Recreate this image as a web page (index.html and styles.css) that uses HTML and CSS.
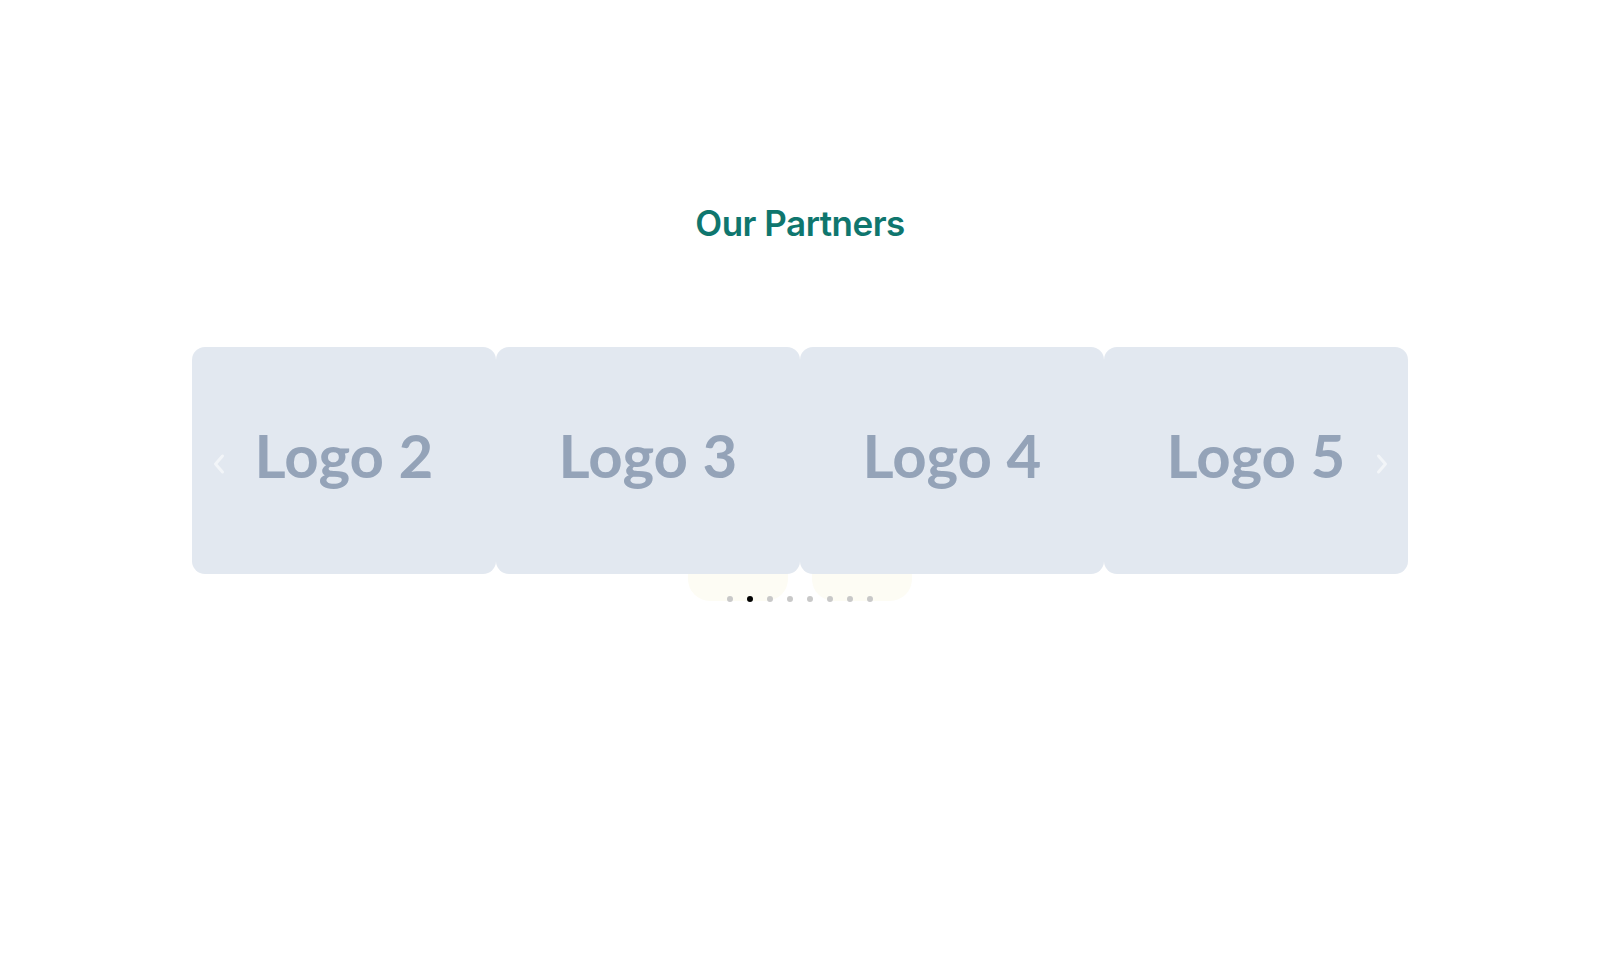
FILE: index.html
```html
<!DOCTYPE html>
<html lang="en">
<head>
<meta charset="utf-8">
<title>Our Partners</title>
<link rel="stylesheet" href="styles.css">
</head>
<body>
  <section class="partners">
    <h2 class="partners-title">Our Partners</h2>

    <div class="carousel">
      <div class="track">
        <div class="slide"><span class="slide-label">Logo 2</span></div>
        <div class="slide"><span class="slide-label">Logo 3</span></div>
        <div class="slide"><span class="slide-label">Logo 4</span></div>
        <div class="slide"><span class="slide-label">Logo 5</span></div>
      </div>
      <button class="nav nav-prev" aria-label="Previous">
        <svg viewBox="0 0 12 22" width="12" height="22"><path d="M9.5 3 L2.5 11 L9.5 19" /></svg>
      </button>
      <button class="nav nav-next" aria-label="Next">
        <svg viewBox="0 0 12 22" width="12" height="22"><path d="M2.5 3 L9.5 11 L2.5 19" /></svg>
      </button>
    </div>

    <div class="pager">
      <div class="pager-bg">
        <span class="pager-blob"></span>
        <span class="pager-blob"></span>
      </div>
      <div class="dots">
        <span class="dot"></span>
        <span class="dot active"></span>
        <span class="dot"></span>
        <span class="dot"></span>
        <span class="dot"></span>
        <span class="dot"></span>
        <span class="dot"></span>
        <span class="dot"></span>
      </div>
    </div>
  </section>
</body>
</html>
```

FILE: styles.css
```css
* {
  box-sizing: border-box;
}

html, body {
  margin: 0;
  padding: 0;
  background: #ffffff;
}

body {
  font-family: "Lato", "Inter", sans-serif;
  min-height: 978px;
}

.partners {
  display: flex;
  flex-direction: column;
  align-items: center;
  padding-top: 203px;
}

.partners-title {
  margin: 0;
  font-family: "Inter", sans-serif;
  font-weight: 600;
  font-size: 35px;
  line-height: 40px;
  letter-spacing: -0.5px;
  color: #0f766e;
}

/* carousel */
.carousel {
  position: relative;
  z-index: 1;
  width: 1216px;
  margin-top: 104px;
}

.track {
  display: flex;
}

.slide {
  flex: 0 0 304px;
  height: 227px;
  display: flex;
  align-items: center;
  justify-content: center;
  padding-bottom: 12px;
  background: #e2e8f0;
  border-radius: 13px;
}

.slide-label {
  font-family: "Lato", sans-serif;
  font-weight: 700;
  font-size: 60px;
  line-height: 1;
  color: #94a3b8;
}

.nav {
  position: absolute;
  top: 106px;
  width: 12px;
  height: 22px;
  padding: 0;
  border: 0;
  background: none;
  cursor: pointer;
}

.nav svg {
  display: block;
  fill: none;
  stroke: rgba(255, 255, 255, 0.55);
  stroke-width: 3;
  stroke-linecap: round;
  stroke-linejoin: round;
}

.nav-prev {
  left: 21px;
}

.nav-next {
  right: 20px;
}

/* pagination */
.pager {
  display: flex;
  flex-direction: column;
  align-items: center;
  margin-top: -30px;
}

.pager-bg {
  display: flex;
  gap: 24px;
}

.pager-blob {
  width: 100px;
  height: 57px;
  background: #fdfcf4;
  border-radius: 0 0 22px 22px;
}

.dots {
  display: flex;
  gap: 14px;
  margin-top: -5px;
}

.dot {
  width: 6px;
  height: 6px;
  border-radius: 50%;
  background: #c8c8c8;
}

.dot.active {
  background: #000000;
}
```
